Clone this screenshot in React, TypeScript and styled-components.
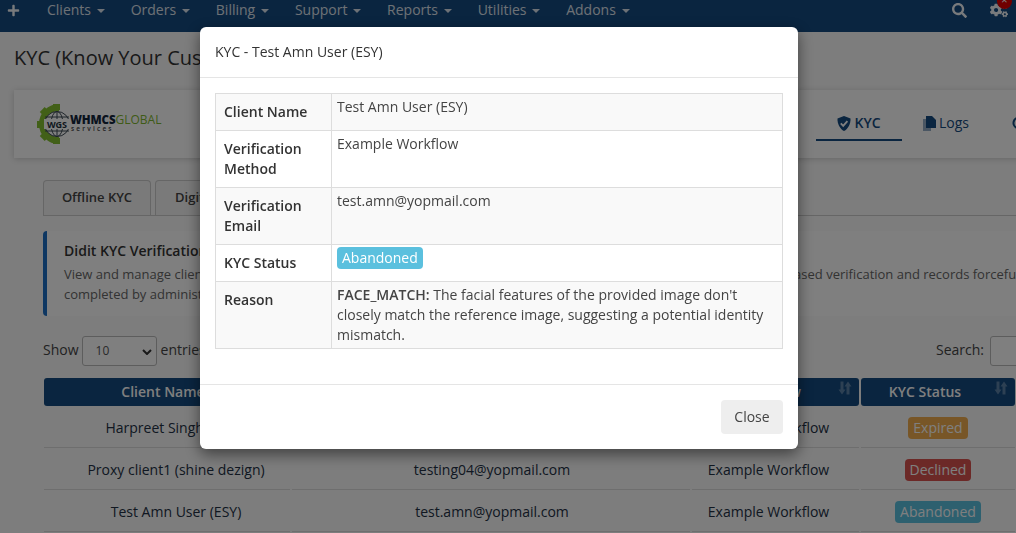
import React from "react";
import styled, { createGlobalStyle } from "styled-components";
import { FaCogs, FaPlus, FaSearch } from "react-icons/fa";

const NAVY = "#144a80";
const FONT = `"Open Sans", "Noto Sans", sans-serif`;

const GlobalStyle = createGlobalStyle`
  html, body {
    margin: 0;
    padding: 0;
    background: #fafafa;
    font-family: ${FONT};
    font-size: 14px;
    line-height: 20px;
    color: #333;
    overflow: hidden;
  }
  * { box-sizing: border-box; }
`;

const Page = styled.div`
  width: 1016px;
  height: 533px;
  overflow: hidden;
`;

const Navbar = styled.nav`
  height: 32px;
  background: ${NAVY};
  display: flex;
  align-items: center;
  padding: 0 8px 12px 7px;
  color: #f0f4f8;
`;

const NavItems = styled.div`
  display: flex;
  margin-left: 14px;
`;

const NavItem = styled.div`
  padding: 0 13px;
  display: flex;
  align-items: center;
  gap: 5.7px;
  opacity: 0.9;
`;

const Caret = styled.span`
  width: 0;
  height: 0;
  margin-top: 2px;
  border-left: 4px solid transparent;
  border-right: 4px solid transparent;
  border-top: 4px solid currentColor;
`;

const NavRight = styled.div`
  margin-left: auto;
  display: flex;
  align-items: center;
  gap: 23px;
  position: relative;
`;

const CloseDot = styled.span`
  position: absolute;
  right: -4px;
  top: -7px;
  width: 15px;
  height: 15px;
  border-radius: 50%;
  background: #e00000;
  color: #fff;
  font-size: 11px;
  line-height: 11px;
  text-align: center;
`;

const Content = styled.div`
  padding: 14px 0 0 14px;
`;

const Title = styled.h1`
  margin: 0;
  font-size: 20px;
  line-height: 24px;
  font-weight: 400;
  white-space: nowrap;
`;

const HeaderCard = styled.div`
  margin-top: 20px;
  width: 1040px;
  height: 68px;
  background: #fff;
  box-shadow: 0 1px 6px rgba(0, 0, 0, 0.18);
  display: flex;
  align-items: center;
  padding-left: 23px;
`;

const Logo = styled.div`
  display: flex;
  align-items: center;
`;

const LogoText = styled.div`
  display: flex;
  flex-direction: column;
  margin-top: -2px;
`;

const LogoLine = styled.div`
  font-size: 11.5px;
  line-height: 11px;
  white-space: nowrap;
  font-weight: 800;
  color: #15263c;
  letter-spacing: -0.1px;
`;

const LogoGlobal = styled.span`
  font-weight: 400;
  font-size: 12px;
  color: #7fb72f;
  letter-spacing: 0;
`;

const LogoSub = styled.div`
  font-size: 6.5px;
  line-height: 7px;
  letter-spacing: 2.2px;
  color: #444;
  font-weight: 600;
  margin-left: 1px;
`;

const CardTabs = styled.div`
  margin-left: auto;
  display: flex;
  height: 100%;
  padding: 18px 6px 0 0;
`;

const CardTab = styled.div<{ $active?: boolean; $width: number }>`
  width: ${({ $width }) => $width}px;
  height: 33px;
  display: flex;
  justify-content: center;
  align-items: center;
  gap: 3px;
  color: ${NAVY};
  padding-bottom: 1px;
  border-bottom: 2px solid ${({ $active }) => ($active ? NAVY : "transparent")};
  font-weight: ${({ $active }) => ($active ? 600 : 400)};
`;

const Panel = styled.div`
  padding: 22px 0 0 29px;
`;

const Tabs = styled.div`
  display: flex;
  gap: 4px;
  width: 1000px;
  height: 36px;
  border-bottom: 1px solid #ccc;
`;

const Tab = styled.div`
  width: 108px;
  background: #f4f4f4;
  border: 1px solid #ccc;
  border-bottom: 0;
  border-radius: 4px 4px 0 0;
  font-size: 13px;
  font-weight: 600;
  padding-top: 6px;
  text-align: center;
  color: #444;
`;

const InfoBox = styled.div`
  margin-top: 15px;
  width: 1000px;
  height: 85px;
  background: #ffffff;
  border-left: 4px solid #1d6fc4;
  border-radius: 4px 0 0 4px;
  padding: 10px 0 0 17px;
  white-space: nowrap;
  overflow: hidden;
`;

const InfoTitle = styled.div`
  font-weight: 600;
  font-size: 14px;
  color: #333;
  margin-bottom: 4px;
`;

const InfoLine = styled.div`
  font-size: 13px;
  line-height: 19px;
  color: #666;
  margin-top: 1px;
`;

const Controls = styled.div`
  margin-top: 20px;
  width: 1007px;
  height: 30px;
  display: flex;
  align-items: center;
  gap: 3px;
  color: #444;
`;

const ControlLabel = styled.span`
  margin-top: -2px;
`;

const Select = styled.div`
  width: 75px;
  height: 30px;
  border: 1px solid #bbb;
  border-radius: 3px;
  background: #fff;
  font-size: 12px;
  padding: 4px 0 0 13px;
  position: relative;
  color: #555;
  margin-right: 1px;
`;

const Chevron = styled.svg`
  position: absolute;
  right: 4px;
  top: 12px;
`;

const SearchWrap = styled.div`
  margin-left: auto;
  display: flex;
  align-items: center;
  gap: 6px;
`;

const SearchInput = styled.div`
  width: 60px;
  height: 30px;
  border: 1px solid #bbb;
  border-radius: 3px;
  background: #fff;
`;

const Grid = styled.div`
  margin-top: 12px;
  width: 972px;
  margin-left: 1px;
  display: grid;
  grid-template-columns: 246px 398px 167px 154px;
  column-gap: 2px;
`;

const Head = styled.div<{ $pad: number }>`
  height: 28px;
  background: ${NAVY};
  color: #fff;
  border-radius: 3px;
  font-weight: 600;
  text-align: center;
  line-height: 28px;
  padding-right: ${({ $pad }) => $pad}px;
  position: relative;
`;

const SortIcon = styled.svg`
  position: absolute;
  right: 7px;
  top: 2px;
  opacity: 0.3;
`;

const Cell = styled.div<{ $left?: number; $right?: number }>`
  height: 42px;
  padding-top: 2px;
  display: flex;
  align-items: center;
  justify-content: center;
  color: #223044;
  border-bottom: 1px solid #ddd;
  padding-left: ${({ $left }) => $left || 0}px;
  padding-right: ${({ $right }) => $right || 0}px;
  white-space: nowrap;
`;

const Badge = styled.span<{ $color: string }>`
  background: ${({ $color }) => $color};
  color: #fff;
  border-radius: 4px;
  padding: 1px 5px;
  line-height: 20px;
`;

const Overlay = styled.div`
  position: fixed;
  inset: 0;
  background: rgba(0, 0, 0, 0.5);
  overflow: hidden;
`;

const Modal = styled.div`
  width: 598px;
  height: 422px;
  margin: 27px 0 0 200px;
  background: #fff;
  border-radius: 6px;
  box-shadow: 0 5px 15px rgba(0, 0, 0, 0.5);
  display: flex;
  flex-direction: column;
`;

const ModalHeader = styled.div`
  height: 51px;
  flex: none;
  padding: 15px;
  border-bottom: 1px solid #e5e5e5;
  color: #333;
`;

const ModalBody = styled.div`
  flex: 1;
  padding: 15px;
`;

const DetailTable = styled.table`
  width: 100%;
  border-collapse: collapse;
  table-layout: fixed;
`;

const Row = styled.tr`
  &:nth-child(odd) {
    background: #f9f9f9;
  }
`;

const Th = styled.th`
  width: 116px;
  border: 1px solid #ddd;
  padding: 8px;
  text-align: left;
  font-weight: 600;
  vertical-align: top;
  color: #333;
`;

const Td = styled.td`
  border: 1px solid #ddd;
  padding: 3px 5px 3px 5px;
  vertical-align: top;
  color: #444;
`;

const Strong = styled.strong`
  font-weight: 600;
`;

const StatusBadge = styled.span`
  display: inline-block;
  margin-top: -1px;
  background: #5bc0de;
  color: #fff;
  border-radius: 4px;
  padding: 1px 5px;
  font-weight: 500;
  line-height: 20px;
  vertical-align: top;
`;

const ModalFooter = styled.div`
  height: 65px;
  flex: none;
  border-top: 1px solid #e5e5e5;
  padding: 15px;
  display: flex;
  justify-content: flex-end;
`;

const CloseButton = styled.button`
  width: 62px;
  height: 34px;
  border: 0;
  border-radius: 4px;
  background: #eeeeee;
  color: #444;
  font: inherit;
`;

const NAV = ["Clients", "Orders", "Billing", "Support", "Reports", "Utilities", "Addons"];

const ROWS = [
  { name: "Harpreet Singh (WGS)", email: "testing01@yopmail.com", status: "Expired", color: "#f0ad4e" },
  { name: "Proxy client1 (shine dezign)", email: "testing04@yopmail.com", status: "Declined", color: "#d9534f" },
  { name: "Test Amn User (ESY)", email: "test.amn@yopmail.com", status: "Abandoned", color: "#5bc0de" },
];

function LogoMark() {
  return (
    <svg width="33" height="40" viewBox="0 0 33 40">
      <g fill="#84c031">
        <rect x="16" y="0" width="7" height="6" />
        <rect x="16" y="34" width="7" height="6" />
        <rect x="0" y="17" width="6" height="7" />
        <rect x="4" y="5" width="7" height="6" transform="rotate(-45 7 8)" />
        <rect x="4" y="29" width="7" height="6" transform="rotate(45 7 32)" />
      </g>
      <path d="M22 3.5 A16.5 16.5 0 1 0 22 36.5" fill="none" stroke="#84c031" strokeWidth="7" />
      <circle cx="20" cy="20" r="12.5" fill="#fff" stroke="#3d4a55" strokeWidth="1" />
      <ellipse cx="20" cy="20" rx="6" ry="12.5" fill="none" stroke="#3d4a55" strokeWidth="1" />
      <path d="M20 7V33M8 13H32M8 27H32" stroke="#3d4a55" strokeWidth="1" />
      <rect x="7" y="15" width="26" height="10" fill="#fff" />
      <text x="20" y="23.5" textAnchor="middle" fontSize="9" fontWeight="700" fontFamily={FONT} fill="#24313c">
        WGS
      </text>
    </svg>
  );
}

function ShieldIcon() {
  return (
    <svg width="14" height="15" viewBox="0 0 14 15">
      <path d="M7 0 L13.5 2.4 C13.8 8 11 12.8 7 15 C3 12.8 0.2 8 0.5 2.4 Z" fill={NAVY} />
      <path d="M3.8 7.4 L6.2 9.8 L10.4 5.2" fill="none" stroke="#fff" strokeWidth="1.9" />
    </svg>
  );
}

function LogsIcon() {
  return (
    <svg width="13" height="15" viewBox="0 0 13 15">
      <path d="M0 3H8V15H0Z" fill={NAVY} opacity="0.45" />
      <path d="M3 0H9L13 4V12H3Z" fill={NAVY} />
    </svg>
  );
}

function RefreshIcon() {
  return (
    <svg width="14" height="14" viewBox="0 0 14 14">
      <path d="M11 3.2 A5.5 5.5 0 1 0 12.5 7" fill="none" stroke={NAVY} strokeWidth="2" />
    </svg>
  );
}

function Sort() {
  return (
    <SortIcon width="14" height="16" viewBox="0 0 14 15">
      <path d="M2.5 1H5.5V9H7.5L4 14L0.5 9H2.5Z" fill="#fff" />
      <path d="M8.5 14H11.5V6H13.5L10 1L6.5 6H8.5Z" fill="#fff" />
    </SortIcon>
  );
}

export default function App() {
  return (
    <>
      <GlobalStyle />
      <Page>
        <Navbar>
          <FaPlus size={13} />
          <NavItems>
            {NAV.map((item) => (
              <NavItem key={item}>
                {item}
                <Caret />
              </NavItem>
            ))}
          </NavItems>
          <NavRight>
            <FaSearch size={15} />
            <FaCogs size={18} />
            <CloseDot>×</CloseDot>
          </NavRight>
        </Navbar>
        <Content>
          <Title>KYC (Know Your Customer) Verification</Title>
          <HeaderCard>
            <Logo>
              <LogoMark />
              <LogoText>
                <LogoLine>
                  WHMCS<LogoGlobal>GLOBAL</LogoGlobal>
                </LogoLine>
                <LogoSub>services</LogoSub>
              </LogoText>
            </Logo>
            <CardTabs>
              <CardTab $active $width={86}>
                <ShieldIcon /> KYC
              </CardTab>
              <CardTab $width={88}>
                <LogsIcon /> Logs
              </CardTab>
              <CardTab $width={58}>
                <RefreshIcon />
              </CardTab>
            </CardTabs>
          </HeaderCard>
          <Panel>
            <Tabs>
              <Tab>Offline KYC</Tab>
              <Tab>Digital KYC</Tab>
            </Tabs>
            <InfoBox>
              <InfoTitle>Didit KYC Verification</InfoTitle>
              <InfoLine>
                View and manage client KYC verification session from Didit, including status tracking, result, expired session, document based verification and records forcefully
              </InfoLine>
              <InfoLine>completed by administrators.</InfoLine>
            </InfoBox>
            <Controls>
              <ControlLabel>Show</ControlLabel>
              <Select>
                10
                <Chevron width="10" height="6" viewBox="0 0 10 6">
                  <path d="M1 1L5 5L9 1" fill="none" stroke="#333" strokeWidth="2" />
                </Chevron>
              </Select>
              <ControlLabel>entries</ControlLabel>
              <SearchWrap>
                <ControlLabel>Search:</ControlLabel>
                <SearchInput />
              </SearchWrap>
            </Controls>
            <Grid>
              <Head $pad={8}>
                Client Name
                <Sort />
              </Head>
              <Head $pad={8}>
                Email
                <Sort />
              </Head>
              <Head $pad={14}>
                Workflow
                <Sort />
              </Head>
              <Head $pad={26}>
                KYC Status
                <Sort />
              </Head>
              {ROWS.map((row) => (
                <React.Fragment key={row.name}>
                  <Cell $left={18}>{row.name}</Cell>
                  <Cell $left={2}>{row.email}</Cell>
                  <Cell $right={14}>Example Workflow</Cell>
                  <Cell>
                    <Badge $color={row.color}>{row.status}</Badge>
                  </Cell>
                </React.Fragment>
              ))}
            </Grid>
          </Panel>
        </Content>
      </Page>
      <Overlay>
        <Modal>
          <ModalHeader>KYC - Test Amn User (ESY)</ModalHeader>
          <ModalBody>
            <DetailTable>
              <tbody>
                <Row>
                  <Th>Client Name</Th>
                  <Td>Test Amn User (ESY)</Td>
                </Row>
                <Row>
                  <Th>Verification Method</Th>
                  <Td>Example Workflow</Td>
                </Row>
                <Row>
                  <Th>Verification Email</Th>
                  <Td>test.amn@yopmail.com</Td>
                </Row>
                <Row>
                  <Th>KYC Status</Th>
                  <Td>
                    <StatusBadge>Abandoned</StatusBadge>
                  </Td>
                </Row>
                <Row>
                  <Th>Reason</Th>
                  <Td>
                    <Strong>FACE_MATCH:</Strong> The facial features of the provided image don't closely match the reference image, suggesting a potential identity mismatch.
                  </Td>
                </Row>
              </tbody>
            </DetailTable>
          </ModalBody>
          <ModalFooter>
            <CloseButton>Close</CloseButton>
          </ModalFooter>
        </Modal>
      </Overlay>
    </>
  );
}
